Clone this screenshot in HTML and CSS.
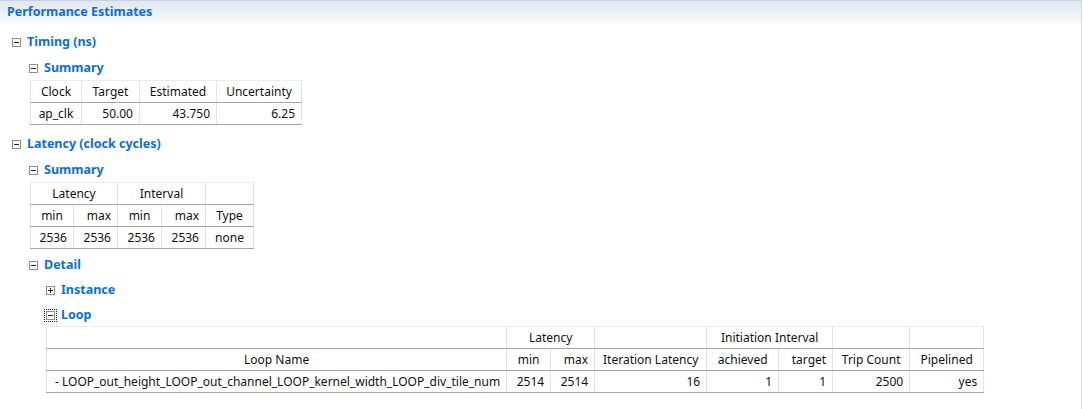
FILE: index.html
```html
<!DOCTYPE html>
<html lang="en">
<head>
    <meta charset="UTF-8">
    <title>Performance Estimates</title>
    <link rel="stylesheet" href="styles.css">
</head>
<body>
    <div class="panel">
        <div class="panel-title">Performance Estimates</div>

        <div class="tree">
            <div class="node lvl1">
                <div class="node-head"><span class="toggle minus"></span>Timing (ns)</div>
                <div class="node lvl2">
                    <div class="node-head"><span class="toggle minus"></span>Summary</div>
                    <table class="grid">
                        <tr>
                            <th class="w51">Clock</th>
                            <th class="w58">Target</th>
                            <th class="w77">Estimated</th>
                            <th class="w85">Uncertainty</th>
                        </tr>
                        <tr>
                            <td class="c">ap_clk</td>
                            <td>50.00</td>
                            <td>43.750</td>
                            <td>6.25</td>
                        </tr>
                    </table>
                </div>
            </div>

            <div class="node lvl1">
                <div class="node-head"><span class="toggle minus"></span>Latency (clock cycles)</div>
                <div class="node lvl2">
                    <div class="node-head"><span class="toggle minus"></span>Summary</div>
                    <table class="grid tight">
                        <tr>
                            <th colspan="2">Latency</th>
                            <th colspan="2">Interval</th>
                            <th></th>
                        </tr>
                        <tr>
                            <th class="w43">min</th>
                            <th class="w44 r">max</th>
                            <th class="w44">min</th>
                            <th class="w44 r">max</th>
                            <th class="w48">Type</th>
                        </tr>
                        <tr>
                            <td>2536</td>
                            <td>2536</td>
                            <td>2536</td>
                            <td>2536</td>
                            <td class="c">none</td>
                        </tr>
                    </table>
                </div>
                <div class="node lvl2">
                    <div class="node-head short"><span class="toggle minus"></span>Detail</div>
                    <div class="node lvl3">
                        <div class="node-head"><span class="toggle plus"></span>Instance</div>
                    </div>
                    <div class="node lvl3">
                        <div class="node-head short"><span class="toggle minus focus"></span>Loop</div>
                        <table class="grid">
                            <tr>
                                <th></th>
                                <th colspan="2">Latency</th>
                                <th></th>
                                <th colspan="2">Initiation Interval</th>
                                <th></th>
                                <th></th>
                            </tr>
                            <tr>
                                <th class="w461">Loop Name</th>
                                <th class="w44">min</th>
                                <th class="w44 r">max</th>
                                <th class="w112">Iteration Latency</th>
                                <th class="w72">achieved</th>
                                <th class="w54 r">target</th>
                                <th class="w77">Trip Count</th>
                                <th class="w74">Pipelined</th>
                            </tr>
                            <tr>
                                <td class="l">- LOOP_out_height_LOOP_out_channel_LOOP_kernel_width_LOOP_div_tile_num</td>
                                <td>2514</td>
                                <td>2514</td>
                                <td>16</td>
                                <td>1</td>
                                <td>1</td>
                                <td>2500</td>
                                <td>yes</td>
                            </tr>
                        </table>
                    </div>
                </div>
            </div>
        </div>
    </div>
</body>
</html>
```

FILE: styles.css
```css
body {
    margin: 0;
    background: #fff;
    font-family: 'Noto Sans', 'Open Sans', sans-serif;
    font-size: 12px;
    color: #111;
}

.panel {
    width: 1082px;
    height: 409px;
    border-top: 1px solid #c5d3e6;
    border-right: 1px solid #d3dce9;
    box-sizing: border-box;
    overflow: hidden;
}

.panel-title {
    height: 24px;
    line-height: 22px;
    padding-left: 7px;
    font-weight: bold;
    font-size: 12.5px;
    color: #0b6fd3;
    background: linear-gradient(to bottom, #e1e6f0, #f3f5f9 75%, #fff);
}

.tree {
    padding-top: 3px;
}

.node-head {
    display: flex;
    align-items: center;
    height: 26px;
    font-weight: bold;
    font-size: 12.5px;
    color: #0b6fd3;
}

.node-head.short {
    height: 24px;
}

.lvl1 > .node-head {
    padding-left: 12px;
}

.lvl2 {
    padding-left: 29px;
}

.lvl3 {
    padding-left: 17px;
}

.toggle {
    position: relative;
    width: 7px;
    height: 7px;
    border: 1px solid #8e8e8e;
    margin-right: 6px;
    margin-top: 2px;
    background: #fff;
}

.toggle::before {
    content: '';
    position: absolute;
    left: 1px;
    top: 3px;
    width: 5px;
    height: 1px;
    background: #222;
}

.toggle.plus::after {
    content: '';
    position: absolute;
    left: 3px;
    top: 1px;
    width: 1px;
    height: 5px;
    background: #222;
}

.toggle.focus {
    outline: 1px dotted #222;
    outline-offset: 1px;
}

.grid {
    border-collapse: collapse;
    table-layout: fixed;
    margin-left: 1px;
    margin-bottom: 5px;
}

.grid.tight {
    margin-bottom: 3px;
}

.lvl3 .grid {
    margin-left: 0;
}

.grid th,
.grid td {
    height: 21px;
    padding: 0 6px;
    font-weight: normal;
    white-space: nowrap;
    border-left: 1px solid #e4e4e4;
    border-right: 1px solid #e4e4e4;
    border-top: 1px solid #ececec;
    border-bottom: 1px solid #a6a6a6;
    text-align: right;
}

.grid th {
    text-align: center;
}

.grid th.r {
    text-align: right;
}

.grid td.c {
    text-align: center;
}

.grid td.l {
    text-align: left;
    padding-left: 8px;
}

.w43 { width: 30px; }
.w44 { width: 31px; }
.w48 { width: 35px; }
.w51 { width: 38px; }
.w54 { width: 41px; }
.w58 { width: 45px; }
.w72 { width: 59px; }
.w74 { width: 61px; }
.w77 { width: 64px; }
.w85 { width: 72px; }
.w112 { width: 99px; }
.w461 { width: 446px; }
```
